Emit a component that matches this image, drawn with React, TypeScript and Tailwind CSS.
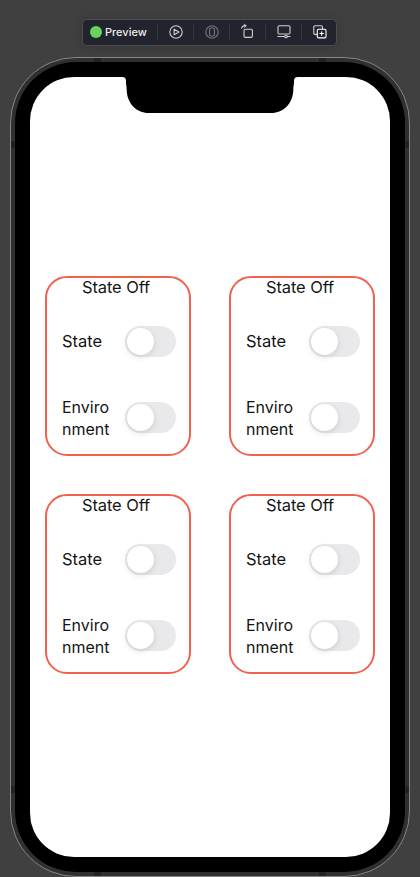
import React from 'react';

function Toggle() {
  return (
    <div className="mb-px flex h-[31px] w-[51px] shrink-0 items-center rounded-full bg-[#e9e9eb] p-[2px]">
      <div className="size-[27px] rounded-full bg-white shadow-[0_2px_6px_rgba(0,0,0,0.13)]" />
    </div>
  );
}

function Card() {
  return (
    <section className="flex h-[180px] w-[146px] flex-col rounded-[22px] border-2 border-[#f0624f] text-[16px] leading-[22px] text-[#151515]">
      <h2 className="-mt-[2px] -ml-1 text-center text-[16.5px] tracking-[-0.1px]">State Off</h2>
      <div className="mt-[28px] flex h-[31px] items-center justify-between pr-[13px] pl-[15px]">
        <span className="pb-[2px] text-[16.5px]">State</span>
        <Toggle />
      </div>
      <div className="mt-[39px] flex h-[44px] items-center justify-between pr-[13px] pl-[15px]">
        <span>
          Enviro
          <br />
          nment
        </span>
        <Toggle />
      </div>
    </section>
  );
}

const iconProps = {
  width: 18,
  height: 18,
  viewBox: '0 0 18 18',
  fill: 'none',
  stroke: 'currentColor',
  strokeWidth: 1.1,
  strokeLinejoin: 'round' as const,
  strokeLinecap: 'round' as const,
};

function PlayIcon() {
  return (
    <svg {...iconProps}>
      <circle cx="9" cy="9" r="6.2" />
      <path d="M7.1 6.2v5.6L12 9z" />
    </svg>
  );
}

function DeviceIcon() {
  return (
    <svg {...iconProps}>
      <circle cx="9" cy="9" r="6.2" />
      <rect x="6.6" y="5" width="4.8" height="8" rx="1.2" />
    </svg>
  );
}

function RotateIcon() {
  return (
    <svg {...iconProps}>
      <rect x="5" y="6.2" width="8.4" height="8.2" rx="1.3" />
      <path d="M2.7 5.3C2.9 3.5 4 2.8 5.7 2.7" />
      <path d="M5.4 1.2 7.5 2.7 5.6 4.3z" fill="currentColor" strokeWidth="0.5" />
    </svg>
  );
}

function DisplayIcon() {
  return (
    <svg {...iconProps}>
      <rect x="3" y="2.8" width="12" height="8.2" rx="1.2" />
      <path d="M2.8 13.5h6.7M12.5 13.5h2.6" />
      <circle cx="11" cy="13.5" r="1.3" />
    </svg>
  );
}

function DuplicateIcon() {
  return (
    <svg {...iconProps}>
      <path d="M6 11.4H4a1.2 1.2 0 0 1-1.2-1.2V4A1.2 1.2 0 0 1 4 2.8h6.2A1.2 1.2 0 0 1 11.4 4v2" />
      <rect x="6.3" y="6.2" width="8.7" height="8.7" rx="1.2" stroke="#ffffff" />
      <path d="M10.65 8.8v3.5M8.9 10.55h3.5" stroke="#ffffff" />
    </svg>
  );
}

function ToolButton({ children, dim = false }: { children: React.ReactNode; dim?: boolean }) {
  return (
    <div className="flex items-center">
      <span className="h-4 w-px bg-[#323640]" />
      <button className={`flex w-[35px] items-center justify-center pl-px ${dim ? 'text-[#74777e]' : 'text-[#cfd0d2]'}`}>
        {children}
      </button>
    </div>
  );
}

export default function App() {
  return (
    <main className="flex h-[877px] w-[420px] flex-col items-center overflow-hidden bg-[#404040] pt-[19px] font-[Inter,'Liberation_Sans',sans-serif]">
      <nav className="mr-px flex h-[27px] w-[255px] shrink-0 items-center rounded-[5px] border border-[#4c4d53] bg-[#21242d] pb-px shadow-[0_1px_8px_rgba(0,0,0,0.2)]">
        <div className="flex w-[74px] shrink-0 items-center gap-[3px] pl-[7px]">
          <span className="size-3 shrink-0 rounded-full bg-[#69d45c]" />
          <span className="text-[11px] font-medium text-[#ededee]">Preview</span>
        </div>
        <ToolButton><PlayIcon /></ToolButton>
        <ToolButton dim><DeviceIcon /></ToolButton>
        <ToolButton><RotateIcon /></ToolButton>
        <ToolButton><DisplayIcon /></ToolButton>
        <ToolButton><DuplicateIcon /></ToolButton>
      </nav>

      <div className="relative mt-[11px] h-[820px] w-[400px] shrink-0 rounded-[66px] border border-[#858585] bg-[#303030] p-[4px]">
        <span className="absolute top-0 left-[83px] h-1 w-[7px] bg-[#222222]" />
        <span className="absolute top-0 right-[83px] h-1 w-[7px] bg-[#222222]" />
        <span className="absolute bottom-0 left-[83px] h-1 w-[7px] bg-[#222222]" />
        <span className="absolute right-[83px] bottom-0 h-1 w-[7px] bg-[#222222]" />
        <span className="absolute top-[83px] left-0 h-[7px] w-1 bg-[#222222]" />
        <span className="absolute top-[83px] right-0 h-[7px] w-1 bg-[#222222]" />
        <span className="absolute bottom-[83px] left-0 h-[7px] w-1 bg-[#222222]" />
        <span className="absolute right-0 bottom-[83px] h-[7px] w-1 bg-[#222222]" />
        <div className="h-full w-full rounded-[61px] bg-black p-[15px]">
          <div className="relative h-full w-full rounded-[44px] bg-white">
            <svg className="absolute top-[-1px] left-[92px]" width="176" height="37" viewBox="0 0 176 37" fill="black">
              <path d="M0 0V1C3 1 4 2.5 4 5C4 10 4.5 8 4.7 14C5 27 14 37 27 37H149C162 37 171 27 171.3 14C171.5 8 172 10 172 5C172 2.5 173 1 176 1V0Z" />
            </svg>
            <div className="grid grid-cols-[146px_146px] gap-x-[38px] gap-y-[38px] pt-[199px] pl-[15px]">
              <Card />
              <Card />
              <Card />
              <Card />
            </div>
          </div>
        </div>
      </div>
    </main>
  );
}
